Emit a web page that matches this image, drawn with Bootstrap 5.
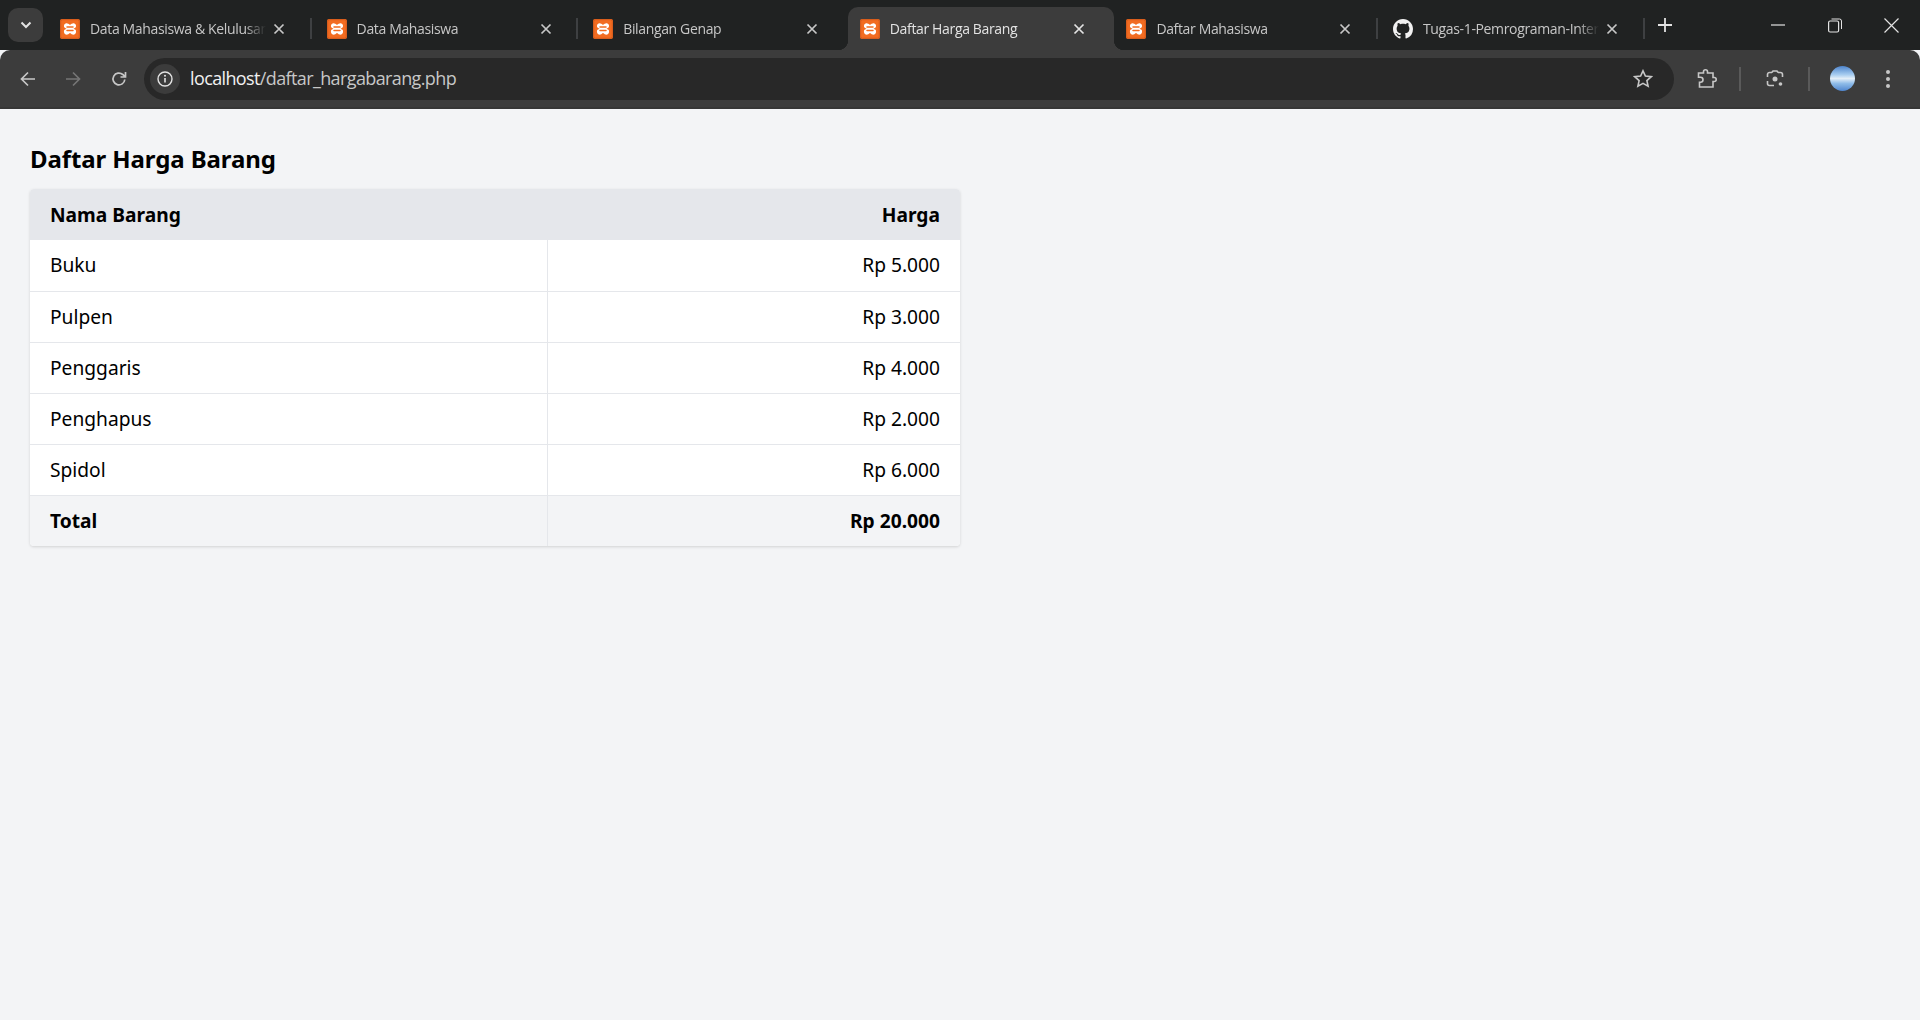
<!DOCTYPE html>
<html lang="en">
<head>
    <meta charset="UTF-8">
    <title>Daftar Harga Barang</title>
    <link href="https://cdn.jsdelivr.net/npm/bootstrap@5.3.2/dist/css/bootstrap.min.css" rel="stylesheet">
    <style>
        html, body { height: 100%; }
        body { background: #f3f4f6; color: #000; font-family: "Noto Sans", "Open Sans", sans-serif; overflow: hidden; }
        svg { display: block; flex: none; }

        .tab-strip { height: 50px; background: #202222; color: #c7c7c7; font-family: "Open Sans", sans-serif; }
        .strip-menu { width: 35px; height: 34px; margin: 8px 5px 0 8px; border-radius: 10px; background: #3c3c3c; }
        .browser-tab { flex: 0 0 266.6px; height: 43px; margin-top: 7px; padding-left: 12px; position: relative; }
        .browser-tab::after { content: ""; position: absolute; right: 3px; top: 11px; width: 2px; height: 21px; background: #3e4042; }
        .browser-tab.no-sep::after, .browser-tab.tab-active::after { display: none; }
        .tab-active { background: #3c3c3c; border-radius: 10px 10px 0 0; color: #e3e3e3; }
        .tab-active::before { content: ""; position: absolute; left: -10px; right: -10px; bottom: 0; height: 10px; z-index: 0;
            background:
                radial-gradient(circle at 0 0, #202222 10px, #3c3c3c 10.5px) left bottom / 10px 10px no-repeat,
                radial-gradient(circle at 100% 0, #202222 10px, #3c3c3c 10.5px) right bottom / 10px 10px no-repeat; }
        .tab-title { width: 176px; margin-left: 10px; font-size: 14px; letter-spacing: -.35px; white-space: nowrap; overflow: hidden;
            -webkit-mask-image: linear-gradient(to right, #000 88%, transparent 100%); mask-image: linear-gradient(to right, #000 88%, transparent 100%); position: relative; }
        .tab-close { margin-left: 7px; position: relative; }
        .win-btn { width: 57px; }

        .tool-bar { height: 59px; background: #3c3c3c; border-radius: 10px 10px 0 0; border-bottom: 2px solid #363636; padding-left: 8px; }
        .tool-btn { width: 40px; height: 40px; }
        .url-box { width: 1530px; height: 42px; margin-left: 5px; background: #282828; border-radius: 21px; padding: 0 8px 0 6px; }
        .url-chip { width: 30px; height: 30px; border-radius: 50%; background: #3c3c3c; }
        .url-text { margin-left: 10px; font-size: 18px; letter-spacing: -.62px; color: #c7c7c7; font-family: "Open Sans", sans-serif; }
        .url-text b { font-weight: 400; color: #f1f1f1; }
        .tool-sep { width: 2px; height: 24px; background: #5a5a5a; }
        .avatar-dot { width: 25px; height: 25px; border-radius: 50%; background: linear-gradient(180deg, #4d84cc 0, #a8cdf0 35%, #e3eef8 50%, #8fbce8 70%, #4f86cf 100%); }

        .page-body { padding: 30px 30px 0; }
        .page-heading { font-size: 24px; line-height: 40px; font-weight: 700; margin: 0 0 10px; letter-spacing: -.1px; }
        .price-wrap { width: 930px; border-radius: 4px; overflow: hidden; box-shadow: 0 1px 3px rgba(0,0,0,.14); background: #fff; }
        .price-table { font-size: 19.2px; color: #000; border-color: #e5e7eb; --bs-table-color: #000; --bs-table-bg: transparent; }
        .price-table th, .price-table td { height: 51px; padding: 0 20px; vertical-align: middle; line-height: 30px; border-color: #e5e7eb; }
        .price-table thead th { background: #e5e7eb; border: 0; }
        .price-table td:first-child { width: 517px; border-right: 1px solid #e5e7eb; }
        .price-table tfoot td { background: #f3f4f6; font-weight: 700; border-bottom: 0; }
    </style>
</head>
<body>

<svg width="0" height="0" class="position-absolute">
    <symbol id="xampp" viewBox="0 0 20 20">
        <rect width="20" height="20" rx="2" fill="#f26c21"/>
        <rect x=".7" y=".7" width="18.6" height="18.6" rx="1.5" fill="none" stroke="#c9561a" stroke-width=".8"/>
        <path d="M5.6 4.4c1.7-.6 3 .6 4.4 1.5 1.4-.9 2.7-2.1 4.4-1.5 1.9.7 2.2 3.4.8 4.4-.5.4-1.1.6-1.7.9.6.3 1.2.5 1.7.9 1.5 1.1 1.1 4.1-.8 4.9-1.7.6-3-.7-4.4-1.6-1.4.9-2.7 2.2-4.4 1.6-1.9-.8-2.3-3.8-.8-4.9.5-.4 1.100-.6 1.700-.9-.6-.3-1.200-.5-1.700-.9-1.400-1-1.100-3.700.8-4.400z" fill="#fff"/>
        <path d="M7 8.100h6M7 11.600h6" stroke="#f26c21" stroke-width="1.500" stroke-linecap="round"/>
    </symbol>
    <symbol id="close-x" viewBox="0 0 12 12">
        <path d="M1.500 1.500l9 9m0-9l-9 9" stroke="currentColor" stroke-width="1.700" fill="none"/>
    </symbol>
</svg>

<!-- tab strip -->
<div class="tab-strip d-flex align-items-start">
    <div class="strip-menu d-flex align-items-center justify-content-center">
        <svg width="12" height="8" viewBox="0 0 12 8"><path d="M1.500 1.500L6 6l4.500-4.500" stroke="#e3e3e3" stroke-width="2" fill="none"/></svg>
    </div>
    <div class="browser-tab d-flex align-items-center">
        <svg width="20" height="20"><use href="#xampp"/></svg>
        <span class="tab-title">Data Mahasiswa &amp; Kelulusan</span>
        <svg class="tab-close" width="12" height="12"><use href="#close-x"/></svg>
    </div>
    <div class="browser-tab d-flex align-items-center">
        <svg width="20" height="20"><use href="#xampp"/></svg>
        <span class="tab-title">Data Mahasiswa</span>
        <svg class="tab-close" width="12" height="12"><use href="#close-x"/></svg>
    </div>
    <div class="browser-tab no-sep d-flex align-items-center">
        <svg width="20" height="20"><use href="#xampp"/></svg>
        <span class="tab-title">Bilangan Genap</span>
        <svg class="tab-close" width="12" height="12"><use href="#close-x"/></svg>
    </div>
    <div class="browser-tab tab-active d-flex align-items-center">
        <svg class="position-relative" width="20" height="20"><use href="#xampp"/></svg>
        <span class="tab-title">Daftar Harga Barang</span>
        <svg class="tab-close" width="12" height="12"><use href="#close-x"/></svg>
    </div>
    <div class="browser-tab d-flex align-items-center">
        <svg width="20" height="20"><use href="#xampp"/></svg>
        <span class="tab-title">Daftar Mahasiswa</span>
        <svg class="tab-close" width="12" height="12"><use href="#close-x"/></svg>
    </div>
    <div class="browser-tab d-flex align-items-center">
        <svg width="20" height="20" viewBox="0 0 16 16"><path fill="#f1f1f1" d="M8 0C3.580 0 0 3.580 0 8c0 3.540 2.290 6.530 5.470 7.590.4.07.55-.17.55-.38 0-.19-.01-.82-.01-1.490-2.010.37-2.530-.49-2.690-.94-.09-.23-.48-.94-.82-1.130-.28-.15-.68-.52-.01-.53.63-.01 1.080.58 1.230.82.72 1.210 1.870.87 2.330.66.07-.52.28-.87.51-1.070-1.780-.2-3.640-.89-3.640-3.950 0-.87.31-1.590.82-2.150-.08-.2-.36-1.020.08-2.120 0 0 .67-.21 2.200.82.64-.18 1.320-.27 2-.27.68 0 1.360.09 2 .27 1.530-1.040 2.200-.82 2.200-.82.44 1.100.16 1.920.08 2.120.51.56.82 1.270.82 2.150 0 3.070-1.870 3.750-3.650 3.950.29.25.54.73.54 1.480 0 1.070-.01 1.930-.01 2.200 0 .21.15.46.55.38A8.013 8.013 0 0016 8c0-4.420-3.580-8-8-8z"/></svg>
        <span class="tab-title">Tugas-1-Pemrograman-Internet</span>
        <svg class="tab-close" width="12" height="12"><use href="#close-x"/></svg>
    </div>
    <div class="d-flex align-items-center justify-content-center" style="width:34px;height:50px">
        <svg width="14" height="14" viewBox="0 0 14 14"><path d="M7 0v14M0 7h14" stroke="#e3e3e3" stroke-width="1.800"/></svg>
    </div>
    <div class="d-flex ms-auto align-items-center" style="height:50px">
        <div class="win-btn d-flex justify-content-center"><svg width="14" height="2"><path d="M0 1h14" stroke="#e3e3e3" stroke-width="1.200"/></svg></div>
        <div class="win-btn d-flex justify-content-center"><svg width="14" height="15" viewBox="0 0 14 15"><rect x=".6" y="3" width="10" height="11" rx="1.500" fill="none" stroke="#e3e3e3" stroke-width="1.200"/><path d="M3.500 1h8a2 2 0 012 2v8" fill="none" stroke="#e3e3e3" stroke-width="1"/></svg></div>
        <div class="win-btn d-flex justify-content-center"><svg width="15" height="15"><path d="M.5.5l14 14m0-14l-14 14" stroke="#e3e3e3" stroke-width="1.200"/></svg></div>
    </div>
</div>

<!-- toolbar -->
<div class="tool-bar d-flex align-items-center">
    <div class="tool-btn d-flex align-items-center justify-content-center">
        <svg width="16" height="16" viewBox="0 0 16 16"><path d="M15 8H2M8 1.500L1.500 8 8 14.500" stroke="#c7c7c7" stroke-width="1.700" fill="none"/></svg>
    </div>
    <div class="tool-btn d-flex align-items-center justify-content-center" style="margin-left:5px">
        <svg width="16" height="16" viewBox="0 0 16 16"><path d="M1 8h13M8 1.500L14.500 8 8 14.500" stroke="#757575" stroke-width="1.700" fill="none"/></svg>
    </div>
    <div class="tool-btn d-flex align-items-center justify-content-center" style="margin-left:6px">
        <svg width="16" height="16" viewBox="0 0 16 16"><path d="M13.800 8.500A5.900 5.900 0 1111.800 3.500L14 5.600M14.500 1v5h-5" stroke="#c7c7c7" stroke-width="1.700" fill="none"/></svg>
    </div>
    <div class="url-box d-flex align-items-center">
        <div class="url-chip d-flex align-items-center justify-content-center">
            <svg width="16" height="16" viewBox="0 0 16 16"><circle cx="8" cy="8" r="7" fill="none" stroke="#e3e3e3" stroke-width="1.400"/><path d="M8 7v4.500" stroke="#e3e3e3" stroke-width="1.600"/><circle cx="8" cy="4.800" r="1" fill="#e3e3e3"/></svg>
        </div>
        <span class="url-text"><b>localhost</b>/daftar_hargabarang.php</span>
        <svg class="ms-auto" style="margin-right:13px" width="20" height="19" viewBox="0 0 20 19"><path d="M10 1.800l2.400 5.300 5.800.6-4.300 3.900 1.200 5.700-5.100-2.900-5.100 2.900 1.200-5.700-4.300-3.900 5.800-.6z" fill="none" stroke="#c7c7c7" stroke-width="1.600"/></svg>
    </div>
    <svg style="margin-left:23px" width="20" height="20" viewBox="0 0 20 20"><path d="M2 4.500h5V3.300a2 2 0 014 0v1.200h5.500V9h1.200a2 2 0 010 4h-1.200v5.500H3V13.800h1a2.500 2.500 0 000-5H2z" transform="translate(-.5 -.500)" fill="none" stroke="#c7c7c7" stroke-width="1.600"/></svg>
    <div class="tool-sep" style="margin-left:22px"></div>
    <svg style="margin-left:24px" width="20" height="20" viewBox="0 0 20 20"><path d="M7 3.500H4.500a2 2 0 00-2 2V8M13 3.500h2.500a2 2 0 012 2V8M2.500 12v2.500a2 2 0 002 2H9" fill="none" stroke="#c7c7c7" stroke-width="1.600"/><path d="M7 3.500l1-1.500h4l1 1.500" fill="none" stroke="#c7c7c7" stroke-width="1.600"/><circle cx="10" cy="10" r="2.500" fill="#c7c7c7"/><circle cx="15.500" cy="15" r="1.800" fill="#c7c7c7"/></svg>
    <div class="tool-sep" style="margin-left:23px"></div>
    <div class="avatar-dot" style="margin-left:20px"></div>
    <svg style="margin-left:31px" width="4" height="18" viewBox="0 0 4 18"><circle cx="2" cy="2" r="2" fill="#c7c7c7"/><circle cx="2" cy="9" r="2" fill="#c7c7c7"/><circle cx="2" cy="16" r="2" fill="#c7c7c7"/></svg>
</div>

<!-- page -->
<div class="page-body">
    <h1 class="page-heading">Daftar Harga Barang</h1>
    <div class="price-wrap">
        <table class="table price-table mb-0">
            <thead>
            <tr>
                <th>Nama Barang</th>
                <th class="text-end">Harga</th>
            </tr>
            </thead>
            <tbody id="priceRows"></tbody>
            <tfoot>
            <tr>
                <td>Total</td>
                <td class="text-end">Rp 20.000</td>
            </tr>
            </tfoot>
        </table>
    </div>
</div>

<script src="https://cdn.jsdelivr.net/npm/bootstrap@5.3.2/dist/js/bootstrap.bundle.min.js"></script>
<script>
    const items = [
      ["Buku", "Rp 5.000"],
      ["Pulpen", "Rp 3.000"],
      ["Penggaris", "Rp 4.000"],
      ["Penghapus", "Rp 2.000"],
      ["Spidol", "Rp 6.000"]
    ];
    document.getElementById("priceRows").innerHTML = items.map(i =>
      `<tr><td>${i[0]}</td><td class="text-end">${i[1]}</td></tr>`
    ).join("");
</script>

</body>
</html>
